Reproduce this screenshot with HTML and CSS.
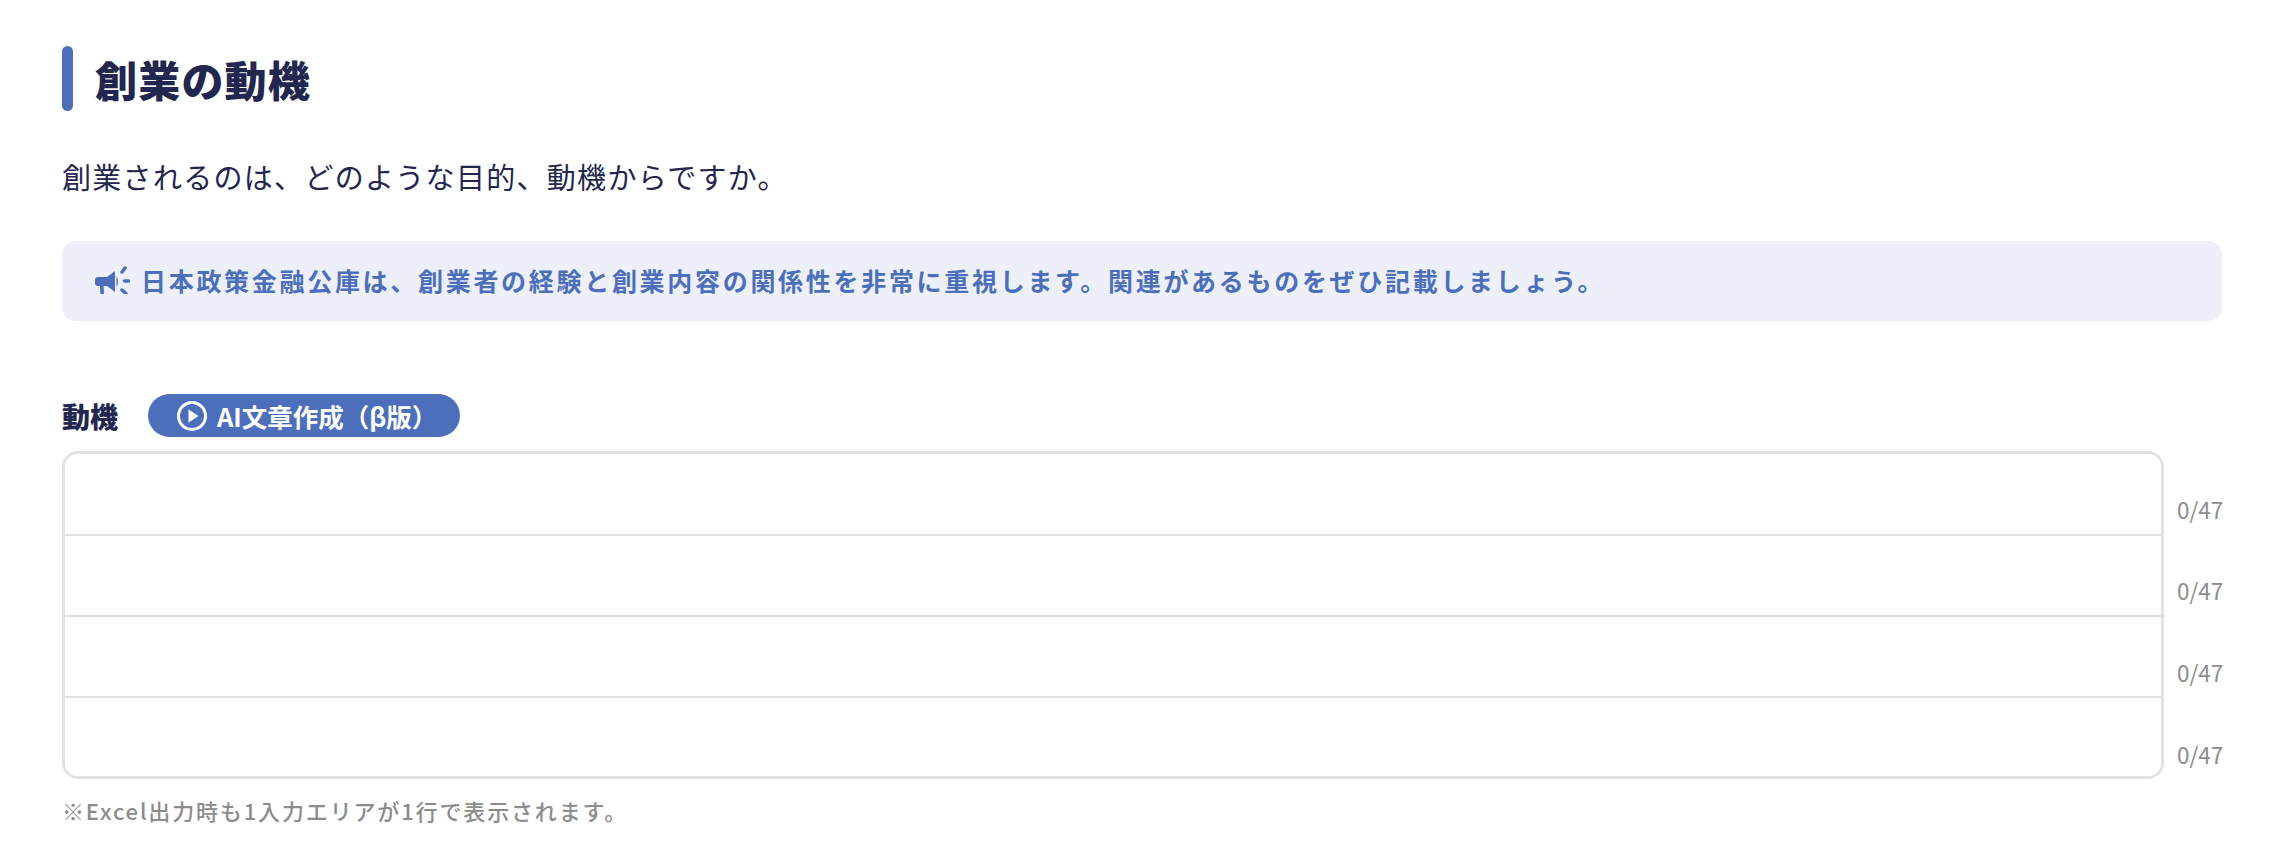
FILE: index.html
```html
<!DOCTYPE html>
<html lang="ja">
<head>
    <meta charset="utf-8">
    <title>創業の動機</title>
    <link rel="stylesheet" href="styles.css">
</head>
<body>
    <div class="container">
        <!-- Heading -->
        <h1 class="section-title">創業の動機</h1>
        <p class="lead">創業されるのは、どのような目的、動機からですか。</p>

        <!-- Notice -->
        <div class="notice">
            <svg class="notice-icon" viewBox="0 0 36 28" aria-hidden="true">
                <path d="M1 14c0-2 1-3 3-3h9l8-6v21l-8-6H9.500L10 27c.1 .8-.4 1.200-1 1.200H7.500c-.7 0-1-.4-1.100-1L6 20H4c-2 0-3-1-3-3z"/>
                <path d="M22.500 10c2 3 2 8 0 11z"/>
                <path class="notice-rays" d="M28 6l3-4M30.500 15h4M28 24l4 3.500"/>
            </svg>
            <span>日本政策金融公庫は、創業者の経験と創業内容の関係性を非常に重視します。関連があるものをぜひ記載しましょう。</span>
        </div>

        <!-- Motive form -->
        <div class="field-head">
            <label class="field-label">動機</label>
            <button class="ai-button">
                <svg class="ai-icon" viewBox="0 0 32 32" aria-hidden="true">
                    <circle cx="16" cy="16" r="13.500"/>
                    <path d="M12.500 9.500v13l10-6.500z"/>
                </svg>
                AI文章作成（β版）
            </button>
        </div>
        <div class="field-body">
            <div class="inputs">
                <input type="text" class="line-input">
                <input type="text" class="line-input">
                <input type="text" class="line-input">
                <input type="text" class="line-input">
            </div>
            <div class="counts">
                <span>0/47</span>
                <span>0/47</span>
                <span>0/47</span>
                <span>0/47</span>
            </div>
        </div>
        <p class="hint">※Excel出力時も1入力エリアが1行で表示されます。</p>
    </div>
</body>
</html>
```

FILE: styles.css
```css
* {
    margin: 0;
    padding: 0;
    box-sizing: border-box;
}
body {
    font-family: "Noto Sans CJK JP", "Noto Sans", sans-serif;
    background-color: #ffffff;
    color: #23264f;
}
.container {
    width: 2160px;
    margin-left: 62px;
    padding-top: 46px;
}
.section-title {
    display: flex;
    align-items: center;
    gap: 22px;
    height: 65px;
    font-size: 42px;
    font-weight: 900;
    letter-spacing: 1.200px;
}
.section-title::before {
    content: "";
    width: 11px;
    height: 65px;
    border-radius: 6px;
    background: #4d6fbb;
}
.lead {
    margin-top: 43px;
    font-size: 29px;
    line-height: 44px;
    letter-spacing: 1.300px;
}
.notice {
    display: flex;
    align-items: center;
    gap: 11px;
    height: 80px;
    margin-top: 43px;
    padding-left: 32px;
    padding-bottom: 2px;
    background: #edf0f8;
    border-radius: 14px;
    color: #4d6fbb;
    font-size: 25px;
    font-weight: 700;
    letter-spacing: 2.700px;
}
.notice-icon {
    width: 36px;
    height: 28px;
    fill: #4d6fbb;
}
.notice-rays {
    fill: none;
    stroke: #4d6fbb;
    stroke-width: 3.500;
    stroke-linecap: round;
}
.field-head {
    display: flex;
    align-items: center;
    gap: 30px;
    margin-top: 73px;
    height: 43px;
}
.field-label {
    font-size: 28px;
    font-weight: 900;
}
.ai-button {
    display: flex;
    align-items: center;
    gap: 9px;
    width: 312px;
    height: 43px;
    padding-left: 28px;
    border: none;
    border-radius: 22px;
    background: #4d6fbb;
    color: #ffffff;
    font-family: inherit;
    font-size: 25.500px;
    font-weight: 700;
}
.ai-icon {
    width: 32px;
    height: 32px;
    fill: #ffffff;
}
.ai-icon circle {
    fill: none;
    stroke: #ffffff;
    stroke-width: 3;
}
.field-body {
    display: flex;
    margin-top: 14px;
}
.inputs {
    flex: none;
    display: flex;
    flex-direction: column;
    width: 2102px;
    height: 328px;
    border: 3px solid #e2e2e2;
    border-radius: 16px;
    overflow: hidden;
}
.line-input {
    flex: none;
    width: 100%;
    height: 81px;
    border: none;
    border-bottom: 2px solid #e0e0e0;
    outline: none;
    background: #ffffff;
}
.line-input:first-child {
    height: 82px;
}
.line-input:last-child {
    flex: 1;
    border-bottom: none;
}
.counts {
    flex: 1;
    height: 328px;
    padding-left: 13px;
    color: #8c8c8c;
    font-size: 22.500px;
}
.counts span {
    display: flex;
    align-items: flex-end;
    height: 81.700px;
    padding-bottom: 8px;
}
.hint {
    margin-top: 15px;
    color: #8c8c8c;
    font-size: 22px;
    font-weight: 500;
    letter-spacing: 1.850px;
}
```
